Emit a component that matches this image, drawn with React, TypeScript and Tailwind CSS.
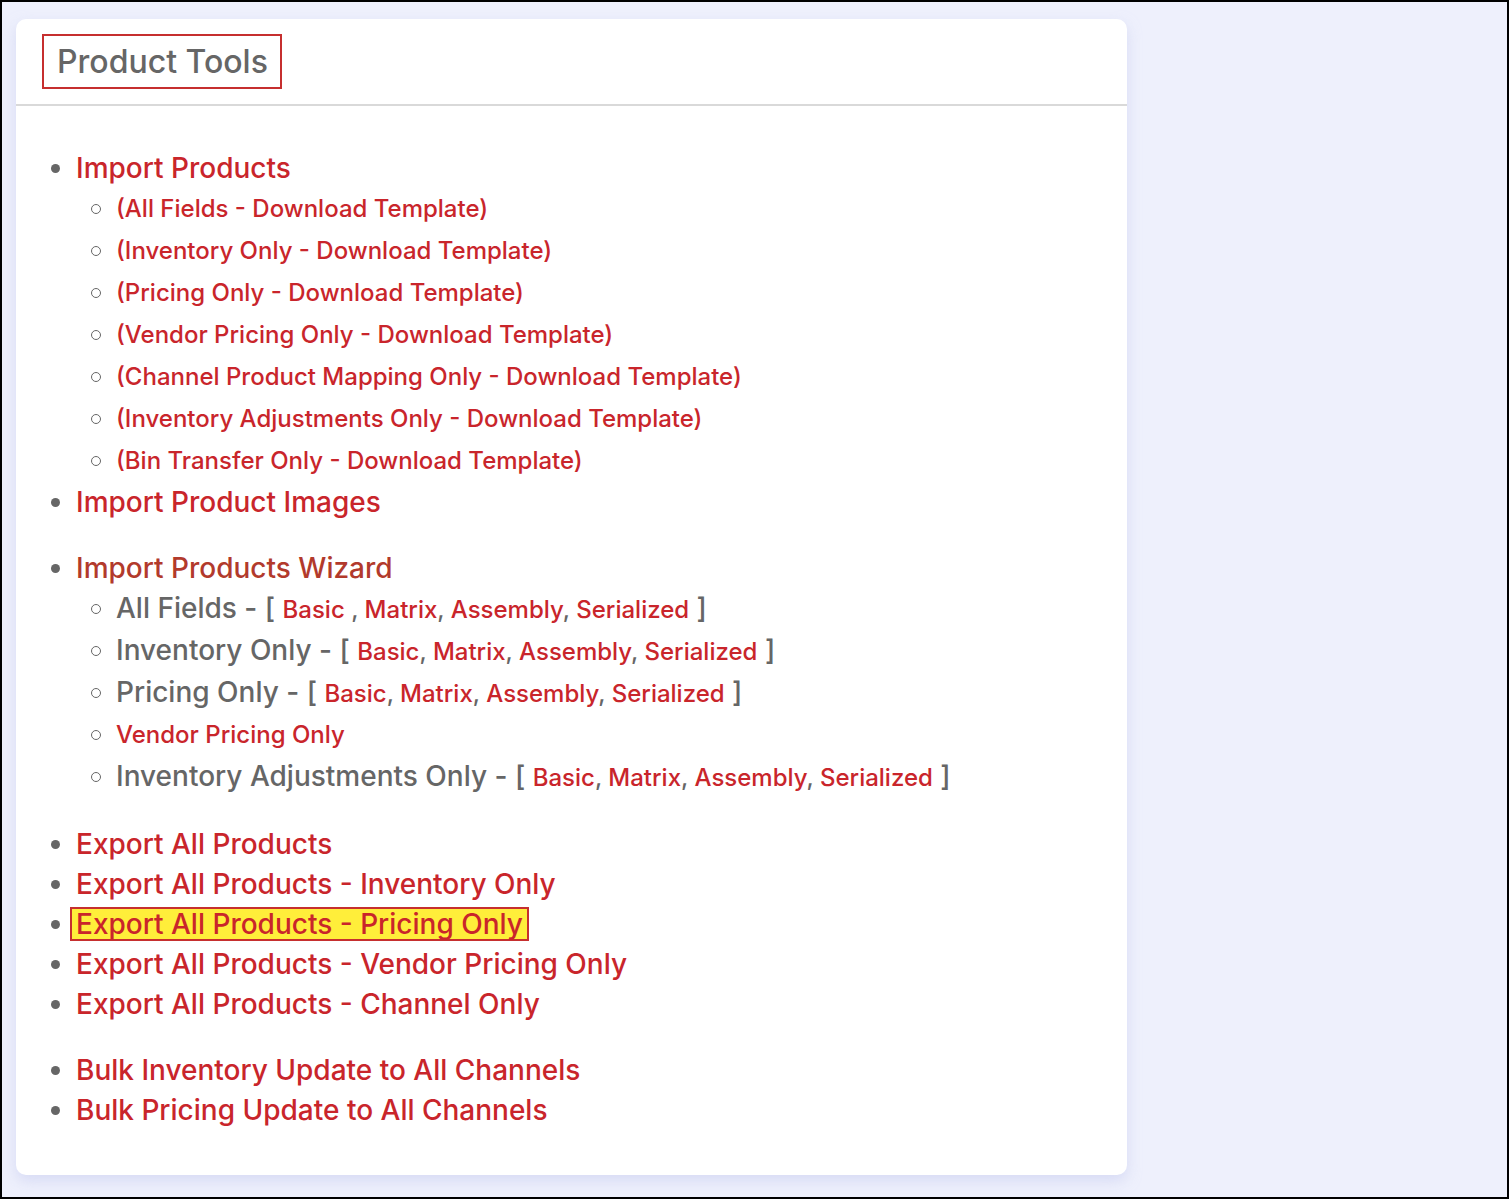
import React from 'react';

const red = 'text-[#c9252b]';

function Sub({ children }: { children: React.ReactNode }) {
  return (
    <li className="flex items-center h-[42px] leading-[42px] text-[24px] -ml-[25px] whitespace-pre">
      <span className="w-[10px] h-[10px] rounded-full border border-[#666] mr-[15px] shrink-0" />
      <span>{children}</span>
    </li>
  );
}

function Variants({ label, tight }: { label: string; tight?: boolean }) {
  return (
    <Sub>
      <span className="text-[28px] text-[#666]">{label} - [ </span>
      <a className={`text-[24px] ${red}`}>Basic</a>
      <span className="text-[24px] text-[#666]">{tight ? ' ,' : ','} </span>
      <a className={`text-[24px] ${red}`}>Matrix</a>
      <span className="text-[24px] text-[#666]">, </span>
      <a className={`text-[24px] ${red}`}>Assembly</a>
      <span className="text-[24px] text-[#666]">, </span>
      <a className={`text-[24px] ${red}`}>Serialized</a>
      <span className="text-[28px] text-[#666]"> ]</span>
    </Sub>
  );
}

function Top({ children, className = '' }: { children: React.ReactNode; className?: string }) {
  return (
    <li className={`h-[40px] leading-[40px] text-[28px] marker:text-[#666] ${className}`}>
      {children}
    </li>
  );
}

export default function App() {
  const templates = [
    '(All Fields - Download Template)',
    '(Inventory Only - Download Template)',
    '(Pricing Only - Download Template)',
    '(Vendor Pricing Only - Download Template)',
    '(Channel Product Mapping Only - Download Template)',
    '(Inventory Adjustments Only - Download Template)',
    '(Bin Transfer Only - Download Template)',
  ];

  return (
    <div
      className="w-[1509px] h-[1199px] border-2 border-black bg-[#eef0fc] pt-[17px] pl-[14px] font-medium"
      style={{ fontFamily: 'Inter, "Noto Sans", sans-serif' }}
    >
      <div className="w-[1111px] h-[1156px] bg-white rounded-[10px] shadow-[0_6px_14px_rgba(200,205,240,0.6)]">
        <div className="h-[87px] border-b-2 border-[#d9d9d9] pt-[15px] pl-[26px]">
          <div className="inline-block h-[55px] border-2 border-[#c62f2f] pl-[13px] pr-[12px] text-[32px] leading-[51px] text-[#666]">
            Product Tools
          </div>
        </div>

        <ul className="list-disc pl-[60px] pt-[42px]">
          <Top>
            <a className={red}>Import Products</a>
          </Top>
          <ul className="pl-[40px]">
            {templates.map((t) => (
              <Sub key={t}>
                <a className={red}>{t}</a>
              </Sub>
            ))}
          </ul>
          <Top>
            <a className={red}>Import Product Images</a>
          </Top>

          <Top className="mt-[26px]">
            <a className="text-[#b23a2c]">Import Products Wizard</a>
          </Top>
          <ul className="pl-[40px]">
            <Variants label="All Fields" tight />
            <Variants label="Inventory Only" />
            <Variants label="Pricing Only" />
            <Sub>
              <a className={red}>Vendor Pricing Only</a>
            </Sub>
            <Variants label="Inventory Adjustments Only" />
          </ul>

          <Top className="mt-[26px]">
            <a className={red}>Export All Products</a>
          </Top>
          <Top>
            <a className={red}>Export All Products - Inventory Only</a>
          </Top>
          <Top>
            <a className={`${red} inline-block h-[34px] leading-[30px] -ml-[6px] px-[4px] bg-[#ffee3a] border-2 border-[#c62f2f]`}>
              Export All Products - Pricing Only
            </a>
          </Top>
          <Top>
            <a className={red}>Export All Products - Vendor Pricing Only</a>
          </Top>
          <Top>
            <a className={red}>Export All Products - Channel Only</a>
          </Top>

          <Top className="mt-[26px]">
            <a className={red}>Bulk Inventory Update to All Channels</a>
          </Top>
          <Top>
            <a className={red}>Bulk Pricing Update to All Channels</a>
          </Top>
        </ul>
      </div>
    </div>
  );
}
